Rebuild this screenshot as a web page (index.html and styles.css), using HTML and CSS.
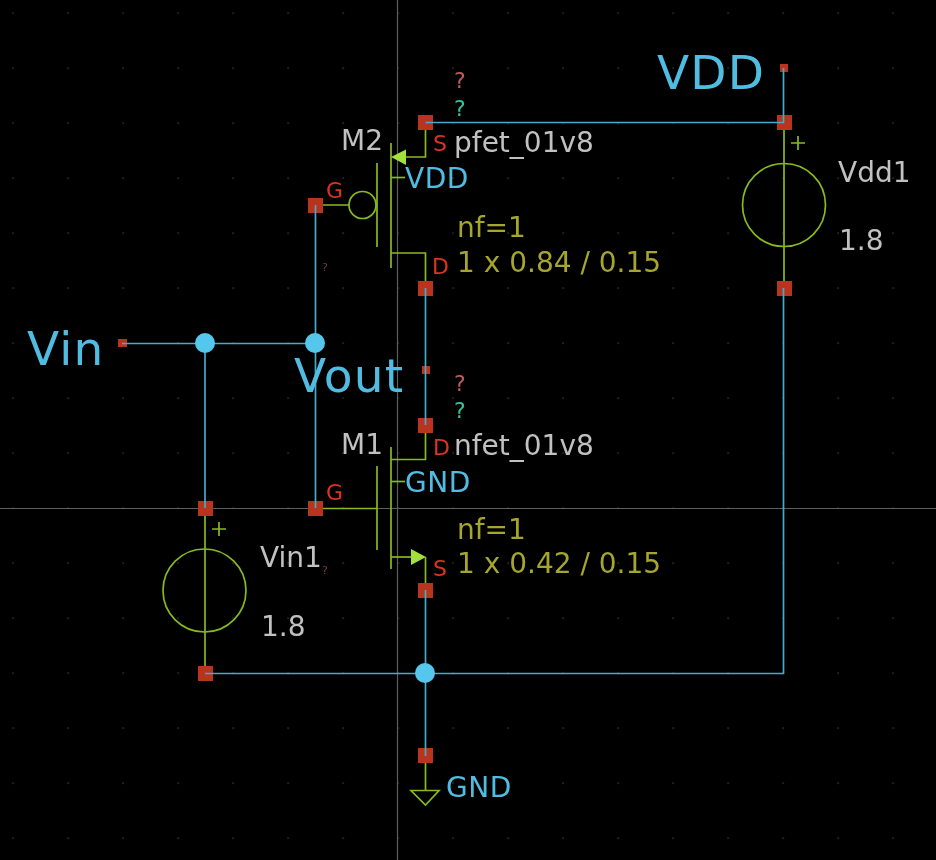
FILE: index.html
```html
<!DOCTYPE html>
<html lang="en">
<head>
<meta charset="utf-8">
<title>CMOS inverter schematic</title>
<link rel="stylesheet" href="styles.css">
</head>
<body>
<svg class="schematic" width="936" height="860" viewBox="0 0 936 860" xmlns="http://www.w3.org/2000/svg">
  <defs>
    <pattern id="grid" x="12.5" y="12.5" width="55" height="55" patternUnits="userSpaceOnUse">
      <rect class="grid-dot" x="0" y="0" width="1.2" height="1.2"/>
    </pattern>
  </defs>
  <rect width="936" height="860" fill="url(#grid)"/>

  <g class="cross">
    <path d="M397.5 0V860M0 508.5H936"/>
  </g>

  <g class="sym">
    <path d="M784 122V288"/>
    <circle cx="784" cy="205" r="41.5"/>
    <path d="M791 143H805M798 136V150"/>
    <path d="M205 508V673"/>
    <circle cx="204.5" cy="590.5" r="41.5"/>
    <path d="M212 529H226M219 522V536"/>

    <path d="M425.5 122V157H400"/>
    <path d="M391 143V268"/>
    <path d="M377 163V247"/>
    <path d="M391 177.5H405"/>
    <circle cx="362.5" cy="205" r="13.5"/>
    <path d="M315 205H349"/>
    <path d="M391 253H425.5V288"/>

    <path d="M391 447V569"/>
    <path d="M377 466V550"/>
    <path d="M316 508.5H377"/>
    <path d="M391 481.5H405"/>
    <path d="M425.5 425V459.5H391"/>
    <path d="M391 557H412"/>
    <path d="M425.5 557V590"/>

    <path d="M425.5 756V790"/>
    <path d="M411 790.5H439L425.5 805Z"/>
  </g>
  <path class="arrow" d="M391 157L406 149.5V165Z"/>
  <path class="arrow" d="M426 557L411 549V565Z"/>

  <g class="pin">
    <rect x="418" y="115" width="15" height="15"/>
    <rect x="308" y="198" width="15" height="15"/>
    <rect x="418" y="281" width="15" height="15"/>
    <rect x="418" y="418" width="15" height="15"/>
    <rect x="308" y="501" width="15" height="15"/>
    <rect x="198" y="501" width="15" height="15"/>
    <rect x="198" y="666" width="15" height="15"/>
    <rect x="418" y="583" width="15" height="15"/>
    <rect x="418" y="748" width="15" height="15"/>
    <rect x="777" y="115" width="15" height="15"/>
    <rect x="777" y="281" width="15" height="15"/>
    <rect x="780" y="64" width="8" height="8"/>
    <rect x="118" y="339" width="9" height="8"/>
    <rect x="422" y="366" width="8" height="8"/>
  </g>

  <g class="wire">
    <path d="M425.5 122.5H783.5V68"/>
    <path d="M783.5 288V673.5H205"/>
    <path d="M425.5 288V425"/>
    <path d="M425.5 590V756"/>
    <path d="M315.5 205V508"/>
    <path d="M122 343.5H315"/>
    <path d="M205 343V508"/>
  </g>

  <g class="node">
    <circle cx="205" cy="343" r="10"/>
    <circle cx="315" cy="343" r="10"/>
    <circle cx="425" cy="673" r="10"/>
  </g>

  <g class="t">
    <text class="net big" x="657" y="89">VDD</text>
    <text class="net big" x="27" y="365">Vin</text>
    <text class="net big" x="294" y="392">Vout</text>
    <text class="net mid" x="405" y="188">VDD</text>
    <text class="net mid" x="405" y="492">GND</text>
    <text class="net mid" x="446" y="797">GND</text>

    <text class="name mid" x="341" y="150">M2</text>
    <text class="name mid" x="454" y="152">pfet_01v8</text>
    <text class="name mid" x="341" y="454">M1</text>
    <text class="name mid" x="454" y="455">nfet_01v8</text>
    <text class="name mid" x="838" y="182">Vdd1</text>
    <text class="name mid" x="839" y="250">1.8</text>
    <text class="name mid" x="260" y="567">Vin1</text>
    <text class="name mid" x="261" y="636">1.8</text>

    <text class="param mid" x="457" y="237">nf=1</text>
    <text class="param mid" x="457" y="272">1 x 0.84 / 0.15</text>
    <text class="param mid" x="457" y="539">nf=1</text>
    <text class="param mid" x="457" y="573">1 x 0.42 / 0.15</text>

    <text class="port sm" x="433" y="151">S</text>
    <text class="port sm" x="326" y="198">G</text>
    <text class="port sm" x="432" y="274">D</text>
    <text class="port sm" x="433" y="455">D</text>
    <text class="port sm" x="326" y="500">G</text>
    <text class="port sm" x="433" y="576">S</text>

    <text class="q-red sm" x="454" y="88">?</text>
    <text class="q-green sm" x="454" y="116">?</text>
    <text class="q-red sm" x="454" y="391">?</text>
    <text class="q-green sm" x="454" y="418">?</text>
    <text class="q-dim tiny" x="322" y="271">?</text>
    <text class="q-dim tiny" x="322" y="574">?</text>
  </g>
</svg>
</body>
</html>
```
FILE: styles.css
```css
html, body {
  margin: 0;
  padding: 0;
  background: #000;
}

.schematic {
  display: block;
  background: #000;
  filter: blur(0.35px);
}

.grid-dot {
  fill: #5a5a5a;
}

.cross path {
  fill: none;
  stroke: #5e5e5e;
  stroke-width: 1.2;
}

.sym path,
.sym circle {
  fill: none;
  stroke: #88ba1e;
  stroke-width: 1.7;
}

.arrow {
  fill: #a2e03c;
}

.pin rect {
  fill: #b8341c;
}

.wire path {
  fill: none;
  stroke: #45aacb;
  stroke-width: 1.7;
}

.node circle {
  fill: #55c6ec;
}

.t {
  opacity: 0.99;
}

.t text {
  font-family: "DejaVu Sans", sans-serif;
}

.big {
  font-size: 47px;
  letter-spacing: 1.2px;
}

.mid { font-size: 28px; }
.sm { font-size: 22px; }
.tiny { font-size: 11px; }

.net { fill: #52bfe4; }
.net.mid { letter-spacing: 0.5px; }
.name { fill: #c4c4c4; }
.param { fill: #a8a830; }
.port { fill: #e03420; }
.q-red { fill: #c45c5c; }
.q-green { fill: #3cc49c; }
.q-dim { fill: #7a3c3c; }
```
